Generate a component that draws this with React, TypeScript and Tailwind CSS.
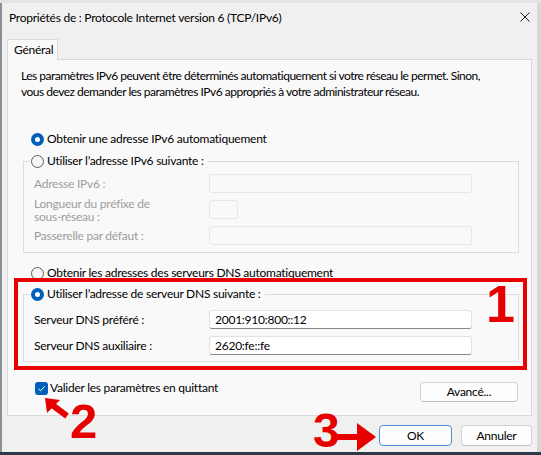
function Radio({ checked }: { checked?: boolean }) {
  if (checked) {
    return (
      <span className="flex h-[13px] w-[13px] shrink-0 items-center justify-center rounded-full bg-[#005fb8]">
        <span className="h-[5px] w-[5px] rounded-full bg-white" />
      </span>
    );
  }
  return <span className="h-[13px] w-[13px] shrink-0 rounded-full border border-[#5c5c5c] bg-[#f6f6f6]" />;
}

function Field({ label, value, disabled, small }: { label: React.ReactNode; value?: string; disabled?: boolean; small?: boolean }) {
  return (
    <div className="flex h-[19px] items-center">
      <div className={`w-[175px] shrink-0 leading-[13px] ${disabled ? "text-[#9d9d9d]" : "text-black"}`}>{label}</div>
      <div
        className={`h-[19px] rounded-[3px] border px-[5px] leading-[17px] ${small ? "w-[29px]" : "w-[263px]"} ${
          disabled ? "border-[#e6e6e6] bg-[#f9f9f9]" : "border-[#e3e3e3] border-b-[#8a8a8a] bg-white"
        }`}
      >
        {value}
      </div>
    </div>
  );
}

function Btn({ children, className }: { children: React.ReactNode; className?: string }) {
  return (
    <div className={`flex items-center justify-center rounded-[4px] border bg-[#fdfdfd] ${className ?? ""}`}>{children}</div>
  );
}

export default function App() {
  return (
    <div className="relative flex h-[455px] w-[541px] flex-col overflow-hidden bg-[#cfd2d6] font-[Lato,sans-serif] text-[12px] tracking-[-0.25px] text-black">
      <div className="h-[3px] bg-[#e4e4e4]" />
      <div className="flex flex-1">
        <div className="w-[2px] bg-[#8a8f96]" />
        <div className="flex w-[535px] flex-col bg-[#f0f0f0]">
          {/* title bar */}
          <div className="flex h-[30px] items-center justify-between pl-[7px] pr-[7px]">
            <span>Propriétés de : Protocole Internet version 6 (TCP/IPv6)</span>
            <svg width="10" height="10" viewBox="0 0 10 10" className="mt-[-2px]">
              <path d="M0.5 0.5 L9.5 9.5 M9.5 0.5 L0.5 9.5" stroke="#1a1a1a" strokeWidth="1" />
            </svg>
          </div>

          <div className="mx-[5px] mt-[6px]">
            <div className="relative z-10 -mb-px flex h-[21px] w-[51px] items-center border border-b-0 border-[#d9d9d9] bg-[#f9f9f9] pl-[6px]">
              Général
            </div>
            <div className="h-[357px] border border-[#d9d9d9] bg-[#f9f9f9] pl-[15px] pr-[12px] pt-[8px]">
              <p className="ml-[-2px] whitespace-nowrap leading-[16px] tracking-[-0.5px]">
                Les paramètres IPv6 peuvent être déterminés automatiquement si votre réseau le permet. Sinon,
                <br />
                vous devez demander les paramètres IPv6 appropriés à votre administrateur réseau.
              </p>

              <div className="mt-[31px] flex h-[16px] items-center gap-[3px] pl-[8px]">
                <Radio checked />
                <span>Obtenir une adresse IPv6 automatiquement</span>
              </div>

              <fieldset className="mt-[6px] border border-[#dcdcdc]">
                <legend className="ml-[6px] flex h-[16px] items-center gap-[3px] pl-[1px] pr-[4px]">
                  <Radio />
                  <span>Utiliser l’adresse IPv6 suivante :</span>
                </legend>
                <div className="flex flex-col gap-[7px] pb-[7px] pl-[10px] pt-[5px]">
                  <Field disabled label="Adresse IPv6 :" />
                  <Field
                    disabled
                    small
                    label={
                      <>
                        Longueur du préfixe de
                        <br />
                        sous-réseau :
                      </>
                    }
                  />
                  <Field disabled label="Passerelle par défaut :" />
                </div>
              </fieldset>

              <div className="mt-[12px] flex h-[16px] items-center gap-[3px] pl-[8px]">
                <Radio />
                <span>Obtenir les adresses des serveurs DNS automatiquement</span>
              </div>

              <div className="relative mr-[-8px] ml-[-9px] mt-[-3px] border-[4px] border-[#e60000] pb-[4px] pl-[5px] pr-[4px] pt-[4px]">
                <fieldset className="border border-[#dcdcdc]">
                  <legend className="ml-[6px] flex h-[16px] items-center gap-[3px] pl-[1px] pr-[4px]">
                    <Radio checked />
                    <span>Utiliser l’adresse de serveur DNS suivante :</span>
                  </legend>
                  <div className="flex flex-col gap-[7px] pb-[6px] pl-[10px] pt-[8px]">
                    <Field label="Serveur DNS préféré :" value="2001:910:800::12" />
                    <Field label="Serveur DNS auxiliaire :" value="2620:fe::fe" />
                  </div>
                </fieldset>
              </div>

              <div className="mt-[10px] flex items-start justify-between">
                <div className="ml-[12px] flex h-[16px] items-center gap-[2px]">
                  <span className="flex h-[13px] w-[13px] items-center justify-center rounded-[3px] bg-[#005fb8]">
                    <svg width="9" height="9" viewBox="0 0 9 9">
                      <path d="M1.5 4.8 L3.6 6.8 L7.6 2.4" fill="none" stroke="white" strokeWidth="1" />
                    </svg>
                  </span>
                  <span>Valider les paramètres en quittant</span>
                </div>
                <Btn className="mr-[1px] mt-[2px] h-[20px] w-[98px] border-[#d3d3d3] border-b-[#bdbdbd]">Avancé...</Btn>
              </div>
            </div>
          </div>

          <div className="flex justify-end gap-[9px] pr-[5px] pt-[9px]">
            <Btn className="h-[21px] w-[73px] border-[#4a8fd6]">OK</Btn>
            <Btn className="h-[21px] w-[71px] border-[#d3d3d3] border-b-[#bdbdbd]">Annuler</Btn>
          </div>
        </div>
        <div className="w-[4px] bg-[#d6d6d6]" />
      </div>
      <div className="h-[3px] bg-[#2e3a47]" />

      {/* annotations */}
      <div className="absolute left-[486px] top-[278px] font-['Liberation_Sans',Arial,sans-serif] text-[52px] font-bold leading-none tracking-normal text-[#e60000]">
        1
      </div>
      <svg className="absolute left-[43px] top-[395px]" width="28" height="24" viewBox="0 0 28 24">
        <polygon points="2,3 17,5 4,18" fill="#e60000" />
        <line x1="8" y1="9" x2="24" y2="21" stroke="#e60000" strokeWidth="6" />
      </svg>
      <div className="absolute left-[70px] top-[401px] font-['Liberation_Sans',Arial,sans-serif] text-[49px] font-bold leading-[40px] tracking-normal text-[#e60000]">
        2
      </div>
      <div className="absolute left-[313px] top-[413px] font-['Liberation_Sans',Arial,sans-serif] text-[48px] font-bold leading-[36px] tracking-normal text-[#e60000]">
        3
      </div>
      <svg className="absolute left-[335px] top-[421px]" width="42" height="32" viewBox="0 0 42 32">
        <rect x="0" y="13" width="24" height="6" fill="#e60000" />
        <polygon points="22,2 41,16 22,30" fill="#e60000" />
      </svg>
    </div>
  );
}
